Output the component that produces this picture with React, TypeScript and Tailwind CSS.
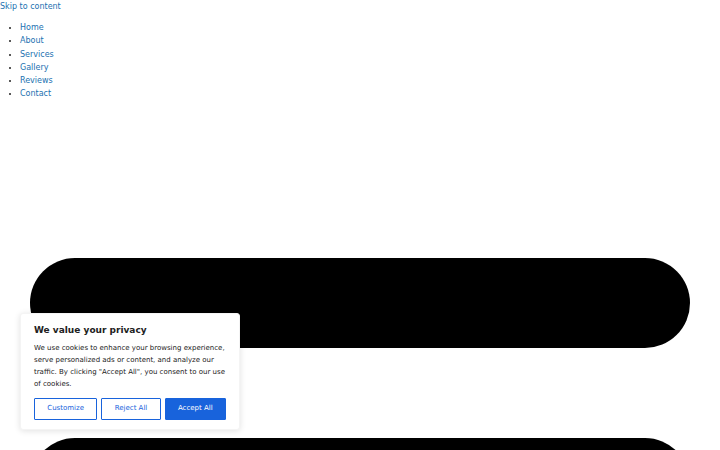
const links = ['Home', 'About', 'Services', 'Gallery', 'Reviews', 'Contact']

export default function App() {
  return (
    <div className="relative h-[450px] overflow-hidden bg-white text-[8px] leading-[13.2px] text-[#222]" style={{ fontFamily: '"DejaVu Sans", sans-serif' }}>
      <a href="#content" className="block text-[#2271b1]">
        Skip to content
      </a>
      <ul className="my-[8px] list-disc pl-[20px]">
        {links.map((l) => (
          <li key={l}>
            <a href="#" className="text-[#2271b1]">
              {l}
            </a>
          </li>
        ))}
      </ul>

      <div className="mx-[30px] mt-[158px] flex flex-col gap-[90px]">
        <div className="h-[90px] rounded-full bg-black" />
        <div className="h-[90px] rounded-full bg-black" />
      </div>

      {/* cookie banner */}
      <div className="absolute left-[20px] top-[313px] w-[220px] rounded-[3px] border border-[#f4f4f4] bg-white px-[13px] pb-[9px] pt-[10px] shadow-[0_1px_6px_rgba(0,0,0,0.12)]">
        <p className="text-[9px] font-bold leading-[12px] text-[#212121]">We value your privacy</p>
        <p className="mt-[6px] text-[7px] leading-[12px] text-[#212121]">
          We use cookies to enhance your browsing experience, serve personalized ads or content, and analyze our traffic. By clicking "Accept All", you consent to our use of cookies.
        </p>
        <div className="mt-[8px] flex gap-[4px] text-[7px]">
          <button className="h-[22px] w-[64px] rounded-[1px] border border-[#1863dc] bg-white text-[#1863dc]">Customize</button>
          <button className="h-[22px] w-[60px] rounded-[1px] border border-[#1863dc] bg-white text-[#1863dc]">Reject All</button>
          <button className="h-[22px] w-[62px] rounded-[1px] border border-[#1863dc] bg-[#1863dc] text-white">Accept All</button>
        </div>
      </div>
    </div>
  )
}
